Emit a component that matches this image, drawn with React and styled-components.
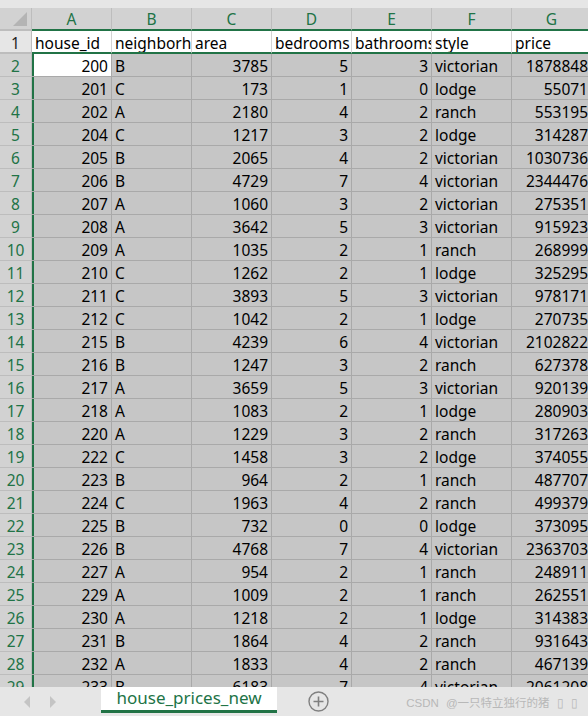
import React from 'react';
import styled, { createGlobalStyle } from 'styled-components';

const GlobalStyle = createGlobalStyle`
  html, body {
    margin: 0;
    padding: 0;
    overflow: hidden;
    background: #e6e6e6;
  }
  * { box-sizing: border-box; }
`;

const GREEN = '#217346';

const headers = ['house_id', 'neighborhood', 'area', 'bedrooms', 'bathrooms', 'style', 'price'];
const numeric = [true, false, true, true, true, false, true];

const rows = [
  [200, 'B', 3785, 5, 3, 'victorian', 1878848],
  [201, 'C', 173, 1, 0, 'lodge', 55071],
  [202, 'A', 2180, 4, 2, 'ranch', 553195],
  [204, 'C', 1217, 3, 2, 'lodge', 314287],
  [205, 'B', 2065, 4, 2, 'victorian', 1030736],
  [206, 'B', 4729, 7, 4, 'victorian', 2344476],
  [207, 'A', 1060, 3, 2, 'victorian', 275351],
  [208, 'A', 3642, 5, 3, 'victorian', 915923],
  [209, 'A', 1035, 2, 1, 'ranch', 268999],
  [210, 'C', 1262, 2, 1, 'lodge', 325295],
  [211, 'C', 3893, 5, 3, 'victorian', 978171],
  [212, 'C', 1042, 2, 1, 'lodge', 270735],
  [215, 'B', 4239, 6, 4, 'victorian', 2102822],
  [216, 'B', 1247, 3, 2, 'ranch', 627378],
  [217, 'A', 3659, 5, 3, 'victorian', 920139],
  [218, 'A', 1083, 2, 1, 'lodge', 280903],
  [220, 'A', 1229, 3, 2, 'ranch', 317263],
  [222, 'C', 1458, 3, 2, 'lodge', 374055],
  [223, 'B', 964, 2, 1, 'ranch', 487707],
  [224, 'C', 1963, 4, 2, 'ranch', 499379],
  [225, 'B', 732, 0, 0, 'lodge', 373095],
  [226, 'B', 4768, 7, 4, 'victorian', 2363703],
  [227, 'A', 954, 2, 1, 'ranch', 248911],
  [229, 'A', 1009, 2, 1, 'ranch', 262551],
  [230, 'A', 1218, 2, 1, 'lodge', 314383],
  [231, 'B', 1864, 4, 2, 'ranch', 931643],
  [232, 'A', 1833, 4, 2, 'ranch', 467139],
  [233, 'B', 6183, 7, 4, 'victorian', 2061208],
];

const Page = styled.div`
  width: 588px;
  height: 716px;
  display: flex;
  flex-direction: column;
  font-family: "Noto Sans", "Liberation Sans", sans-serif;
  background: #e6e6e6;
`;

const TopStrip = styled.div`
  height: 8px;
  flex: none;
  background: #e6e6e6;
`;

const Sheet = styled.div`
  flex: 1;
  overflow: hidden;
  display: grid;
  grid-template-columns: 32px repeat(7, 80px);
  grid-auto-rows: 23px;
  align-content: start;
`;

const Corner = styled.div`
  position: relative;
  background: #d2d2d2;
  border-right: 1px solid #bdbdbd;
  border-bottom: 2px solid #bdbdbd;
  &::after {
    content: '';
    position: absolute;
    right: 4px;
    bottom: 3px;
    width: 0;
    height: 0;
    border-left: 14px solid transparent;
    border-bottom: 14px solid #b4b4b4;
  }
`;

const ColHead = styled.div`
  background: #d2d2d2;
  border-right: 1px solid #bdbdbd;
  border-bottom: 2px solid ${GREEN};
  color: ${GREEN};
  font-size: 15.5px;
  line-height: 21px;
  text-align: center;
  padding-top: 1px;
`;

const RowHead = styled.div`
  background: ${(p) => (p.$selected ? '#d2d2d2' : '#e6e6e6')};
  color: ${(p) => (p.$selected ? GREEN : '#1f1f1f')};
  border-right: 1px solid #bdbdbd;
  border-bottom: ${(p) => (p.$first ? '2px solid #bdbdbd' : '1px solid #bdbdbd')};
  font-size: 15.5px;
  line-height: 22px;
  text-align: center;
  padding-top: 1px;
`;

const Cell = styled.div`
  background: ${(p) => (p.$header || p.$active ? '#ffffff' : '#c6c6c6')};
  border-right: 1px solid ${(p) => (p.$header ? '#d4d4d4' : '#a9a9a9')};
  border-bottom: ${(p) => (p.$header ? `2px solid ${GREEN}` : '1px solid #a9a9a9')};
  box-shadow: ${(p) => (p.$edge ? `inset 2px 0 0 ${GREEN}` : 'none')};
  color: #000;
  font-size: 15.5px;
  line-height: 22px;
  padding-top: 1px;
  white-space: nowrap;
  overflow: hidden;
  text-align: ${(p) => (p.$num ? 'right' : 'left')};
  padding-right: ${(p) => (p.$num ? '3px' : '0')};
  padding-left: ${(p) => (p.$num ? '0' : '3px')};
`;

const BottomBar = styled.div`
  height: 29px;
  flex: none;
  background: #e6e6e6;
  display: flex;
  align-items: stretch;
`;

const Arrows = styled.div`
  width: 101px;
  display: flex;
  align-items: center;
  gap: 20px;
  padding-left: 24px;
`;

const Arrow = styled.span`
  width: 0;
  height: 0;
  border-top: 6px solid transparent;
  border-bottom: 6px solid transparent;
  ${(p) => (p.$left ? 'border-right: 6px solid #c4c4c4;' : 'border-left: 6px solid #c4c4c4;')}
`;

const Tab = styled.div`
  width: 176px;
  height: 26px;
  background: #fff;
  border-bottom: 3px solid ${GREEN};
  color: ${GREEN};
  font-size: 17px;
  line-height: 22px;
  text-align: center;
`;

const AddButton = styled.div`
  margin-left: 31px;
  width: 21px;
  height: 21px;
  align-self: center;
  display: flex;
`;

const Watermark = styled.div`
  margin-left: auto;
  padding-right: 10px;
  align-self: center;
  color: #b8b8b8;
  font-size: 11.5px;
  font-family: "Liberation Sans", "Noto Sans CJK SC", sans-serif;
  word-spacing: 4px;
`;

const letters = ['A', 'B', 'C', 'D', 'E', 'F', 'G'];

export default function App() {
  return (
    <Page>
      <GlobalStyle />
      <TopStrip />
      <Sheet>
        <Corner />
        {letters.map((l) => (
          <ColHead key={l}>{l}</ColHead>
        ))}
        <RowHead $first>1</RowHead>
        {headers.map((h) => (
          <Cell key={h} $header>{h}</Cell>
        ))}
        {rows.map((r, ri) => (
          <React.Fragment key={ri}>
            <RowHead $selected>{ri + 2}</RowHead>
            {r.map((v, ci) => (
              <Cell
                key={ci}
                $num={numeric[ci]}
                $active={ri === 0 && ci === 0}
                $edge={ci === 0}
              >
                {v}
              </Cell>
            ))}
          </React.Fragment>
        ))}
      </Sheet>
      <BottomBar>
        <Arrows>
          <Arrow $left />
          <Arrow />
        </Arrows>
        <Tab>house_prices_new</Tab>
        <AddButton>
          <svg width="21" height="21" viewBox="0 0 21 21">
            <circle cx="10.5" cy="10.5" r="9.5" fill="none" stroke="#808080" strokeWidth="1.4" />
            <path d="M10.5 5.5v10M5.5 10.5h10" stroke="#808080" strokeWidth="1.6" />
          </svg>
        </AddButton>
        <Watermark>CSDN @一只特立独行的猪 ▯ ▯</Watermark>
      </BottomBar>
    </Page>
  );
}
